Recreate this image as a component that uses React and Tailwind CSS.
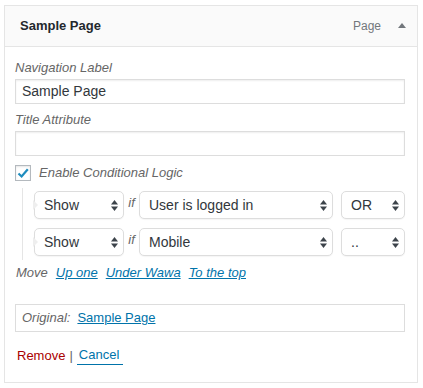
import React from "react";

const SelectArrows = () => (
  <svg width="7" height="11" viewBox="0 0 7 11" className="shrink-0">
    <polygon points="0,4.5 3.5,0 7,4.5" fill="#3c434a" />
    <polygon points="0,6.5 7,6.5 3.5,11" fill="#3c434a" />
  </svg>
);

const Select = ({ value, w }) => (
  <div
    className={`${w} h-[28px] shrink-0 flex items-center justify-between pl-[9px] pr-[5px] border border-[#dddddd] rounded-[5px] bg-white text-[14px] text-[#32373c] shadow-[0_1px_1px_rgba(0,0,0,0.04)]`}
  >
    <span>{value}</span>
    <SelectArrows />
  </div>
);

const Arrow = () => (
  <svg width="6" height="10" viewBox="0 0 6 10" className="absolute left-[-1px] top-[9px]">
    <polygon points="0,0 5,5 0,10" fill="#eeeeee" />
  </svg>
);

const Row = ({ a, b, c }) => (
  <div className="relative flex items-start">
    <Arrow />
    <Select value={a} w="w-[90px]" />
    <span className="w-[19px] text-center mt-[3px] italic text-[13px] leading-[18px] text-[#666]">if</span>
    <Select value={b} w="w-[194px]" />
    <div className="ml-[8px]">
      <Select value={c} w="w-[64px]" />
    </div>
  </div>
);

export default function App() {
  return (
    <div
      className="bg-white min-h-[388px] pt-[5px] pl-[4px]"
      style={{ fontFamily: '"Liberation Sans", Arial, sans-serif' }}
    >
      <div className="w-[414px] border border-[#e5e5e5] bg-white">
        <div className="h-[41px] bg-[#fafafa] border-b border-[#e5e5e5] flex items-center pl-[15px] pr-[11px]">
          <span className="text-[13px] font-bold text-[#23282d]">Sample Page</span>
          <span className="ml-auto text-[12px] text-[#72777c]">Page</span>
          <svg width="8" height="5" viewBox="0 0 8 5" className="ml-[17px] mb-[1px]">
            <polygon points="0,5 4,0 8,5" fill="#72777c" />
          </svg>
        </div>

        <div className="pl-[10px] pr-[12px] pt-[12px] pb-[17px]">
          <div className="italic text-[13px] leading-[18px] text-[#666] mb-[2px]">Navigation Label</div>
          <div className="w-[390px] h-[25px] border border-[#dddddd] shadow-[inset_0_1px_2px_rgba(0,0,0,0.07)] px-[6px] flex items-center text-[14px] text-[#32373c]">
            Sample Page
          </div>

          <div className="italic text-[13px] leading-[18px] text-[#666] mt-[7px] mb-[2px]">Title Attribute</div>
          <div className="w-[390px] h-[25px] border border-[#dddddd] shadow-[inset_0_1px_2px_rgba(0,0,0,0.07)]" />

          <div className="mt-[8px] h-[18px] flex items-center">
            <div className="w-[16px] h-[16px] border border-[#b4b9be] bg-white shadow-[inset_0_1px_2px_rgba(0,0,0,0.1)] flex items-center justify-center">
              <svg width="14" height="14" viewBox="0 0 14 14">
                <path d="M2.5 7.5 L5.6 10.5 L11.8 3.2" fill="none" stroke="#1e8cbe" strokeWidth="2.2" />
              </svg>
            </div>
            <span className="ml-[8px] italic text-[13px] leading-[18px] text-[#666]">Enable Conditional Logic</span>
          </div>

          <div className="mt-[6px] ml-[7px] border-l border-[#e5e5e5] pl-[11px] pt-[3px] pb-[4px] flex flex-col gap-[9px]">
            <Row a="Show" b="User is logged in" c="OR" />
            <Row a="Show" b="Mobile" c=".." />
          </div>

          <div className="mt-[4px] flex items-center gap-[8px] pl-[1px] italic text-[13px] leading-[18px]">
            <span className="text-[#666]">Move</span>
            <span className="text-[#0073aa] underline">Up one</span>
            <span className="text-[#0073aa] underline">Under Wawa</span>
            <span className="text-[#0073aa] underline">To the top</span>
          </div>

          <div className="mt-[22px] w-[390px] h-[28px] border border-[#dddddd] flex items-center pl-[6px] text-[13px]">
            <span className="italic text-[#666]">Original:</span>
            <span className="ml-[7px] text-[#0073aa] underline">Sample Page</span>
          </div>

          <div className="mt-[14px] pl-[2px] flex items-center text-[13px] leading-[18px]">
            <span className="text-[#a00]">Remove</span>
            <span className="text-[#666] mx-[4px]">|</span>
            <span className="text-[#0073aa] border-b border-[#0073aa] pl-[2px] pr-[4px]">Cancel</span>
          </div>
        </div>
      </div>
    </div>
  );
}
